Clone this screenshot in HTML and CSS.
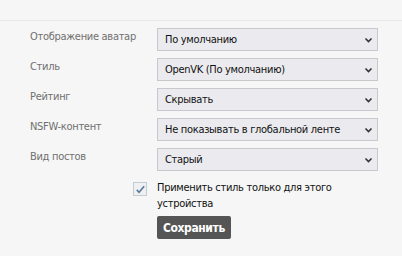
FILE: index.html
```html
<!DOCTYPE html>
<html lang="ru">
<head>
    <meta charset="UTF-8">
    <title>Настройки интерфейса</title>
    <link rel="stylesheet" href="styles.css">
</head>
<body>
    <div class="page">
        <form class="settings-form">
            <label class="field-label">Отображение аватар</label>
            <div class="select-wrap">
                <select class="field-select">
                    <option>По умолчанию</option>
                </select>
                <svg class="chevron" width="9" height="6" viewBox="0 0 9 6"><path d="M1.5 1.5l3 3 3-3" fill="none" stroke="#333" stroke-width="1.6"/></svg>
            </div>

            <label class="field-label">Стиль</label>
            <div class="select-wrap">
                <select class="field-select">
                    <option>OpenVK (По умолчанию)</option>
                </select>
                <svg class="chevron" width="9" height="6" viewBox="0 0 9 6"><path d="M1.5 1.5l3 3 3-3" fill="none" stroke="#333" stroke-width="1.6"/></svg>
            </div>

            <label class="field-label">Рейтинг</label>
            <div class="select-wrap">
                <select class="field-select">
                    <option>Скрывать</option>
                </select>
                <svg class="chevron" width="9" height="6" viewBox="0 0 9 6"><path d="M1.5 1.5l3 3 3-3" fill="none" stroke="#333" stroke-width="1.6"/></svg>
            </div>

            <label class="field-label">NSFW-контент</label>
            <div class="select-wrap">
                <select class="field-select">
                    <option>Не показывать в глобальной ленте</option>
                </select>
                <svg class="chevron" width="9" height="6" viewBox="0 0 9 6"><path d="M1.5 1.5l3 3 3-3" fill="none" stroke="#333" stroke-width="1.6"/></svg>
            </div>

            <label class="field-label">Вид постов</label>
            <div class="select-wrap">
                <select class="field-select">
                    <option>Старый</option>
                </select>
                <svg class="chevron" width="9" height="6" viewBox="0 0 9 6"><path d="M1.5 1.5l3 3 3-3" fill="none" stroke="#333" stroke-width="1.6"/></svg>
            </div>

            <div class="check-row">
                <span class="check-box">
                    <svg width="13" height="13" viewBox="0 0 13 13"><path d="M3 7l2.5 2.5L11 3" fill="none" stroke="#5e7d9c" stroke-width="1.8"/></svg>
                </span>
                <span class="check-text">Применить стиль только для этого устройства</span>
            </div>

            <div class="button-row">
                <button type="submit" class="save-button">Сохранить</button>
            </div>
        </form>
    </div>
</body>
</html>
```

FILE: styles.css
```css
/* Global */
* {
    margin: 0;
    padding: 0;
    box-sizing: border-box;
}

body {
    font-family: 'DejaVu Sans', Verdana, sans-serif;
    font-stretch: condensed;
    font-size: 11px;
    letter-spacing: -0.3px;
    background-color: #f6f6f6;
    color: #000;
}

.page {
    margin-top: 20px;
    border-top: 1px solid #e8e8e8;
    padding: 7px 0 0 30px;
}

/* Form grid */
.settings-form {
    display: grid;
    grid-template-columns: 127px 221px;
    row-gap: 7px;
    align-items: start;
}

.field-label {
    color: #707070;
    line-height: 16px;
    padding-top: 1px;
}

.select-wrap {
    position: relative;
    height: 23px;
}

.field-select {
    appearance: none;
    -webkit-appearance: none;
    width: 100%;
    height: 23px;
    border: 1px solid #c9c9cd;
    border-radius: 0;
    background-color: #ebebef;
    font-family: inherit;
    font-stretch: condensed;
    font-size: 11px;
    letter-spacing: -0.3px;
    color: #111;
    padding: 0 20px 0 7px;
    outline: none;
}

.chevron {
    position: absolute;
    right: 5px;
    top: 9px;
    pointer-events: none;
}

/* Checkbox */
.check-row {
    grid-column: 1 / 3;
    display: flex;
    align-items: flex-start;
    padding-left: 103px;
    margin-top: 2px;
}

.check-box {
    width: 14px;
    height: 14px;
    margin-top: 2px;
    margin-right: 10px;
    border: 1px solid #c5cbd2;
    background-color: #eef0f2;
    display: flex;
    align-items: center;
    justify-content: center;
}

.check-text {
    width: 221px;
    line-height: 16px;
    color: #111;
}

/* Button */
.button-row {
    grid-column: 2;
    margin-top: -3px;
}

.save-button {
    height: 23px;
    padding: 0 6px;
    background-color: #555;
    color: #fff;
    border: none;
    border-radius: 2px;
    font-family: inherit;
    font-stretch: condensed;
    font-size: 12px;
    letter-spacing: -0.4px;
    font-weight: bold;
    cursor: pointer;
}
```
